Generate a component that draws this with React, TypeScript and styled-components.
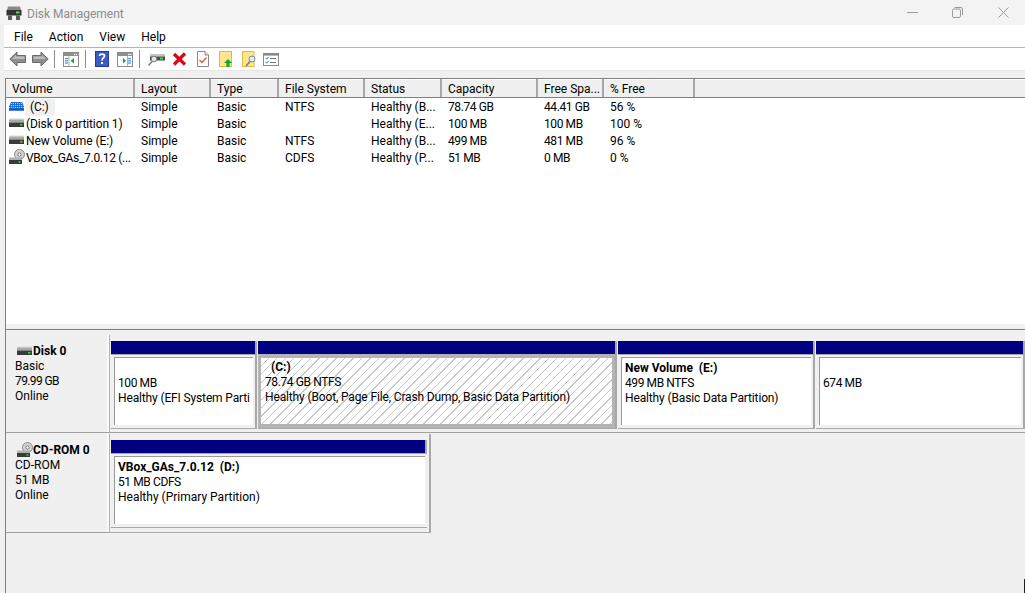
import React from "react";
import styled, { createGlobalStyle } from "styled-components";

const Global = createGlobalStyle`
  html, body { margin: 0; padding: 0; height: 100%; overflow: hidden; background: #f0f0f0; }
  #root { height: 100%; }
`;

const Window = styled.div`
  position: relative; width: 1025px; height: 593px; display: flex; flex-direction: column; overflow: hidden;
  font-family: Roboto, "Noto Sans", sans-serif; font-size: 12px; color: #000; background: #f0f0f0;
`;
const TitleBar = styled.div`
  height: 25px; flex: none; display: flex; align-items: center; background: #f3f3f3; padding-left: 6px;
`;
const TitleText = styled.span`
  margin: 2px 0 0 5px; color: #8c8c8c; font-size: 12px; flex: 1;
`;
const WinButton = styled.div<{ $w: number }>`
  width: ${(p) => p.$w}px; height: 25px; display: flex; align-items: center; justify-content: center;
`;
const MenuBar = styled.div`
  height: 21px; padding-top: 1px; flex: none; margin-left: 4px; background: #fff; display: flex; align-items: center;
  padding-left: 10px; gap: 16px; border-bottom: 1px solid #b4b4b4;
`;
const Toolbar = styled.div`
  height: 22px; flex: none; margin-left: 4px; background: #fff; display: flex; align-items: center;
  border-bottom: 1px solid #e6e6e6;
`;
const ToolSlot = styled.div<{ $ml: number }>`
  margin-left: ${(p) => p.$ml}px; height: 22px; display: flex; align-items: center; flex: none;
`;
const ToolSep = styled.div<{ $ml: number }>`
  width: 1px; height: 18px; background: #8a8a8a; flex: none; margin-left: ${(p) => p.$ml}px;
`;
const Main = styled.div`
  flex: 1; display: flex; flex-direction: column; margin: 7px 0 0 5px;
  border-left: 1px solid #808080; border-top: 1px solid #808080;
`;
const ListPane = styled.div`
  height: 245px; flex: none; background: #fff;
`;
const HeaderRow = styled.div`
  height: 18px; display: flex; background: #f0f0f0; border-bottom: 1px solid #808080;
  box-shadow: inset 0 1px 0 #fff;
`;
const HeaderCell = styled.div<{ $w: number }>`
  width: ${(p) => p.$w}px; flex: none; box-sizing: border-box; padding: 2px 0 0 6px; line-height: 16px;
  border-right: 2px solid #a8a8a8; white-space: nowrap; overflow: hidden;
`;
const RowList = styled.div`
  padding-top: 1px;
`;
const Row = styled.div`
  height: 17px; display: flex; line-height: 17px;
`;
const Cell = styled.div<{ $w: number; $num?: boolean }>`
  width: ${(p) => p.$w}px; flex: none; box-sizing: border-box; padding-left: 6px; white-space: nowrap; overflow: hidden;
  ${(p) => (p.$num ? "letter-spacing: -0.4px;" : "")}
`;
const VolumeCell = styled.div`
  width: 129px; flex: none; display: flex; align-items: center; padding-left: 3px; box-sizing: border-box; white-space: nowrap;
`;
const VolumeIcon = styled.span`
  display: flex; flex: none; margin-top: -2px;
`;
const VolumeName = styled.span<{ $sel?: boolean; $tight?: boolean }>`
  margin-left: ${(p) => (p.$sel ? "0" : "1px")};
  padding: 0 ${(p) => (p.$sel ? "6px" : "0")} 0 ${(p) => (p.$sel ? "5px" : "0")};
  background: ${(p) => (p.$sel ? "#f0f0f0" : "transparent")};
  letter-spacing: ${(p) => (p.$tight ? "-0.3px" : "-0.1px")};
`;
const Splitter = styled.div`
  height: 5px; flex: none; background: #f0f0f0; border-bottom: 1px solid #808080;
`;
const DiskPane = styled.div`
  flex: 1; padding-top: 5px; display: flex; flex-direction: column;
`;
const DiskRow = styled.div<{ $h: number }>`
  height: ${(p) => p.$h}px; flex: none; display: flex; box-sizing: border-box;
`;
const DiskRowRule = styled.div`
  height: 1px; background: #a0a0a0; flex: none; margin-bottom: 1px;
`;
const DiskLabel = styled.div<{ $ruled?: boolean }>`
  width: 104px; flex: none; box-sizing: border-box; padding: 9px 0 0 9px; line-height: 15px;
  border-right: 1px solid #b0b0b0; background: #f0f0f0;
  box-shadow: inset -2px 0 0 #fafafa;
  ${(p) => (p.$ruled ? "border-bottom: 1px solid #a0a0a0;" : "")}
`;
const DiskTitle = styled.div`
  display: flex; align-items: center; font-weight: 700; line-height: 15px; height: 15px; margin-left: 2px;
`;
const DiskLine = styled.div<{ $num?: boolean }>`
  ${(p) => (p.$num ? "letter-spacing: -0.6px;" : "")}
`;
const Partitions = styled.div<{ $framed?: boolean }>`
  display: flex; align-self: flex-start; padding: 6px 0 0 1px;
  ${(p) => (p.$framed ? "padding-bottom: 4px; padding-right: 1px; border-right: 2px solid #a8a8a8; border-bottom: 1px solid #a8a8a8;" : "")}
`;
const Partition = styled.div<{ $w: number; $open?: boolean }>`
  width: ${(p) => p.$w}px; flex: none; display: flex; flex-direction: column; box-sizing: content-box;
  border-bottom: 1px solid #a8a8a8; margin-right: 1px;
  ${(p) => (p.$open ? "" : "border-right: 2px solid #a8a8a8;")}
`;
const Bar = styled.div<{ $edge?: boolean }>`
  height: 13px; background: #000080; flex: none;
  ${(p) => (p.$edge ? "border-right: 2px solid #a8a8a8;" : "")}
`;
const PartBody = styled.div<{ $sel?: boolean }>`
  height: 74px; box-sizing: border-box; background: #f0f0f0;
  ${(p) =>
    p.$sel
      ? "border: 3px solid #b4b4b4; border-top-width: 4px; border-bottom-width: 4px;"
      : "border-top: 1px solid #a8a8a8; padding: 2px 2px 3px 3px;"}
`;
const PartInner = styled.div<{ $hatch?: boolean }>`
  height: 100%; box-sizing: border-box; white-space: pre; line-height: 15px; color: #000;
  padding: ${(p) => (p.$hatch ? "2px 0 0 4px" : "3px 0 0 3px")};
  ${(p) =>
    p.$hatch
      ? `background-color: #fff;
         background-image: repeating-linear-gradient(135deg, #fff 0, #fff 5px, #c8c8c8 5px, #c8c8c8 6px);`
      : `background: #fff; border-top: 1px solid #999; border-left: 1px solid #999;`}
`;
const PartName = styled.div<{ $indent?: boolean }>`
  font-weight: 700; height: 15px; ${(p) => (p.$indent ? "padding-left: 6px;" : "")}
`;
const PartLine = styled.div<{ $num?: boolean; $tight?: boolean }>`
  ${(p) => (p.$num ? "letter-spacing: -0.4px;" : "")}
  ${(p) => (p.$tight ? "letter-spacing: -0.14px;" : "")}
`;
const Spacer = styled.div`
  height: 15px;
`;
const EdgeMark = styled.div`
  position: absolute; right: 0; top: 579px; width: 1px; height: 14px; background: #222;
`;

const IconDisk = () => (
  <svg width="16" height="16" viewBox="0 0 16 16">
    <rect x="0.5" y="2.5" width="14" height="1" fill="#d8d8d8" />
    <rect x="0" y="3.5" width="15" height="3" fill="#a8a8a8" />
    <rect x="0" y="6.5" width="15" height="4.5" fill="#3a3a3a" />
    <rect x="11" y="8" width="2.5" height="1.5" fill="#3fd04a" />
  </svg>
);
const IconVolumeC = () => (
  <svg width="16" height="16" viewBox="0 0 16 16">
    <defs>
      <pattern id="dots" width="2" height="2" patternUnits="userSpaceOnUse">
        <rect width="2" height="2" fill="#1c6ee0" />
        <rect width="1" height="1" fill="#a5d5ff" />
      </pattern>
    </defs>
    <polygon points="2,3 13,3 15,7 15,11.5 0,11.5 0,7" fill="url(#dots)" />
    <rect x="0" y="9.5" width="15" height="2" fill="#0d57c0" />
  </svg>
);
const IconCd = () => (
  <svg width="16" height="17" viewBox="0 0 16 17">
    <circle cx="10.5" cy="5.5" r="5" fill="#d2d2d2" stroke="#8c8c8c" />
    <circle cx="10.5" cy="5.5" r="1.6" fill="#fff" stroke="#777" />
    <rect x="0" y="8.5" width="13" height="2.5" fill="#b0b0b0" />
    <rect x="0" y="11" width="13" height="4" fill="#3a3a3a" />
    <rect x="9.5" y="12.3" width="2" height="1.5" fill="#3fd04a" />
  </svg>
);
const IconApp = () => (
  <svg width="16" height="16" viewBox="0 0 16 16">
    <path d="M2 1.5 H14 L15 5 H1 Z" fill="#8a8a8a" />
    <rect x="0.5" y="5" width="15" height="5.5" fill="#333" />
    <rect x="10" y="6.5" width="3.5" height="2" fill="#56e05c" />
    <rect x="2" y="10.5" width="4" height="4.5" fill="#5c5c5c" />
    <rect x="10" y="10.5" width="4" height="4.5" fill="#5c5c5c" />
  </svg>
);
const IconArrow = ({ right }: { right?: boolean }) => (
  <svg width="17" height="16" viewBox="0 0 17 16">
    <g transform={right ? "matrix(-1 0 0 1 17 0)" : undefined}>
      <path d="M8 1 L0.8 8 L8 15 V11.5 H16.5 V4.5 H8 Z" fill="#8f8f8f" stroke="#6a6a6a" />
      <path d="M7 4 L3 8 H15.5 V5.5 H7 Z" fill="#bdbdbd" />
    </g>
  </svg>
);
const IconPane = ({ right }: { right?: boolean }) => (
  <svg width="16" height="15" viewBox="0 0 16 15">
    <rect x="0.5" y="0.5" width="15" height="14" fill="#fff" stroke="#8a8a8a" />
    <rect x="1" y="1" width="14" height="3" fill="#8f8f8f" />
    <rect x="11" y="1.8" width="1.3" height="1.3" fill="#fff" />
    <rect x="13" y="1.8" width="1.3" height="1.3" fill="#fff" />
    {right ? (
      <>
        <path d="M6 6 L9 8.7 L6 11.5 Z" fill="#1ea32c" />
        <rect x="11" y="6" width="3" height="1.2" fill="#4a90d9" />
        <rect x="11" y="8.2" width="3" height="1.2" fill="#4a90d9" />
        <rect x="11" y="10.4" width="3" height="1.2" fill="#4a90d9" />
        <rect x="10" y="4" width="0.8" height="10" fill="#9a9a9a" />
      </>
    ) : (
      <>
        <path d="M11 6 L7.5 8.7 L11 11.5 Z" fill="#1ea32c" />
        <rect x="2" y="6" width="3" height="1.2" fill="#4a90d9" />
        <rect x="2" y="8.2" width="3" height="1.2" fill="#4a90d9" />
        <rect x="2" y="10.4" width="3" height="1.2" fill="#4a90d9" />
        <rect x="5.5" y="4" width="0.8" height="10" fill="#9a9a9a" />
      </>
    )}
  </svg>
);
const IconHelp = () => (
  <svg width="14" height="16" viewBox="0 0 14 16">
    <rect x="0" y="0" width="14" height="16" fill="#24399a" />
    <rect x="1" y="1" width="12" height="14" fill="#3b5cc4" />
    <path d="M4.5 5 C4.5 2.4 9.5 2.4 9.5 5 C9.5 7 7 7 7 9.5" fill="none" stroke="#fff" strokeWidth="1.7" />
    <rect x="6" y="11" width="2" height="2" fill="#fff" />
  </svg>
);
const IconConnect = () => (
  <svg width="17" height="16" viewBox="0 0 17 16">
    <rect x="2" y="3" width="15" height="2.5" fill="#c4c4c4" />
    <rect x="2" y="5.5" width="15" height="4" fill="#4a4a4a" />
    <rect x="12" y="6.5" width="3" height="2" fill="#46d44e" />
    <circle cx="6" cy="8" r="2.8" fill="#d9e9f7" stroke="#7a7a7a" />
    <line x1="4" y1="10.5" x2="0.5" y2="14.5" stroke="#7a7a7a" strokeWidth="1.5" />
  </svg>
);
const IconDelete = () => (
  <svg width="15" height="14" viewBox="0 0 15 14">
    <path d="M2 2 L13 12.5 M13 1.5 L2 12.5" stroke="#d40a14" strokeWidth="3.2" />
  </svg>
);
const IconCheckDoc = () => (
  <svg width="12" height="16" viewBox="0 0 12 16">
    <path d="M0.5 0.5 H8 L11.5 4 V15.5 H0.5 Z" fill="#fff" stroke="#8a8a8a" />
    <path d="M8 0.5 V4 H11.5" fill="#e6e6e6" stroke="#8a8a8a" />
    <path d="M2.5 9 L5 11.5 L9.5 6.5" fill="none" stroke="#e2552a" strokeWidth="1.3" />
  </svg>
);
const IconFolderUp = () => (
  <svg width="13" height="16" viewBox="0 0 13 16">
    <rect x="0.5" y="0.5" width="12" height="15" fill="#fde68e" stroke="#e3b93d" />
    <path d="M9 8 L13 12 H10.6 V16 H7.4 V12 H5 Z" fill="#13a82a" />
  </svg>
);
const IconFolderSearch = () => (
  <svg width="15" height="16" viewBox="0 0 15 16">
    <rect x="0.5" y="0.5" width="11.5" height="15" fill="#fde68e" stroke="#e3b93d" />
    <circle cx="10" cy="8" r="3" fill="#dcecf8" stroke="#7d8a96" />
    <line x1="8" y1="10.5" x2="4" y2="15" stroke="#6d7a86" strokeWidth="1.5" />
  </svg>
);
const IconList = () => (
  <svg width="16" height="13" viewBox="0 0 16 13">
    <rect x="0.5" y="0.5" width="15" height="12" fill="#fff" stroke="#8a8a8a" />
    <rect x="1" y="1" width="14" height="1.6" fill="#8a8a8a" />
    <path d="M2.5 5 L3.7 6.2 L5.5 4" fill="none" stroke="#2e80d0" />
    <path d="M2.5 9 L3.7 10.2 L5.5 8" fill="none" stroke="#2e80d0" />
    <rect x="7" y="5" width="6" height="1" fill="#777" />
    <rect x="7" y="9" width="6" height="1" fill="#777" />
  </svg>
);

const columns = [
  ["Volume", 129], ["Layout", 76], ["Type", 68], ["File System", 86],
  ["Status", 77], ["Capacity", 96], ["Free Spa...", 66], ["% Free", 91],
] as const;

const rows = [
  { icon: <IconVolumeC />, name: "(C:)", sel: true, fs: "NTFS", status: "Healthy (B...", cap: "78.74 GB", free: "44.41 GB", pct: "56 %" },
  { icon: <IconDisk />, name: "(Disk 0 partition 1)", fs: "", status: "Healthy (E...", cap: "100 MB", free: "100 MB", pct: "100 %" },
  { icon: <IconDisk />, name: "New Volume (E:)", fs: "NTFS", status: "Healthy (B...", cap: "499 MB", free: "481 MB", pct: "96 %" },
  { icon: <IconCd />, name: "VBox_GAs_7.0.12 (...", tight: true, fs: "CDFS", status: "Healthy (P...", cap: "51 MB", free: "0 MB", pct: "0 %" },
];

export default function App() {
  return (
    <Window>
      <Global />
      <TitleBar>
        <IconApp />
        <TitleText>Disk Management</TitleText>
        <WinButton $w={42}>
          <svg width="11" height="11" viewBox="0 0 11 11"><line x1="0" y1="5.5" x2="11" y2="5.5" stroke="#9a9a9a" /></svg>
        </WinButton>
        <WinButton $w={48}>
          <svg width="11" height="11" viewBox="0 0 11 11"><rect x="0.5" y="2" width="8" height="8.5" rx="1.5" fill="none" stroke="#9a9a9a" /><path d="M2.5 0.5 H9 Q10.5 0.5 10.5 2 V8" fill="none" stroke="#9a9a9a" /></svg>
        </WinButton>
        <WinButton $w={44}>
          <svg width="11" height="11" viewBox="0 0 11 11"><path d="M0.5 0.5 L10.5 10.5 M10.5 0.5 L0.5 10.5" stroke="#9a9a9a" /></svg>
        </WinButton>
      </TitleBar>
      <MenuBar>
        <span>File</span><span>Action</span><span>View</span><span>Help</span>
      </MenuBar>
      <Toolbar>
        <ToolSlot $ml={5}><IconArrow /></ToolSlot>
        <ToolSlot $ml={6}><IconArrow right /></ToolSlot>
        <ToolSep $ml={5} />
        <ToolSlot $ml={8}><IconPane /></ToolSlot>
        <ToolSep $ml={6} />
        <ToolSlot $ml={9}><IconHelp /></ToolSlot>
        <ToolSlot $ml={8}><IconPane right /></ToolSlot>
        <ToolSep $ml={6} />
        <ToolSlot $ml={8}><IconConnect /></ToolSlot>
        <ToolSlot $ml={7}><IconDelete /></ToolSlot>
        <ToolSlot $ml={10}><IconCheckDoc /></ToolSlot>
        <ToolSlot $ml={10}><IconFolderUp /></ToolSlot>
        <ToolSlot $ml={10}><IconFolderSearch /></ToolSlot>
        <ToolSlot $ml={6}><IconList /></ToolSlot>
      </Toolbar>
      <Main>
        <ListPane>
          <HeaderRow>
            {columns.map(([t, w]) => (
              <HeaderCell key={t} $w={w}>{t}</HeaderCell>
            ))}
          </HeaderRow>
          <RowList>
            {rows.map((r) => (
              <Row key={r.name}>
                <VolumeCell>
                  <VolumeIcon>{r.icon}</VolumeIcon>
                  <VolumeName $sel={r.sel} $tight={r.tight}>{r.name}</VolumeName>
                </VolumeCell>
                <Cell $w={76}>Simple</Cell>
                <Cell $w={68}>Basic</Cell>
                <Cell $w={86}>{r.fs}</Cell>
                <Cell $w={77}>{r.status}</Cell>
                <Cell $w={96} $num>{r.cap}</Cell>
                <Cell $w={66} $num>{r.free}</Cell>
                <Cell $w={91}>{r.pct}</Cell>
              </Row>
            ))}
          </RowList>
        </ListPane>
        <Splitter />
        <DiskPane>
          <DiskRow $h={97}>
            <DiskLabel>
              <DiskTitle><IconDisk />Disk 0</DiskTitle>
              <DiskLine>Basic</DiskLine>
              <DiskLine $num>79.99 GB</DiskLine>
              <DiskLine>Online</DiskLine>
            </DiskLabel>
            <Partitions>
              <Partition $w={144}>
                <Bar />
                <PartBody>
                  <PartInner>
                    <Spacer />
                    <PartLine $num>100 MB</PartLine>
                    <PartLine $tight>Healthy (EFI System Parti</PartLine>
                  </PartInner>
                </PartBody>
              </Partition>
              <Partition $w={357}>
                <Bar />
                <PartBody $sel>
                  <PartInner $hatch>
                    <PartName $indent>(C:)</PartName>
                    <PartLine $num>78.74 GB NTFS</PartLine>
                    <PartLine $tight>Healthy (Boot, Page File, Crash Dump, Basic Data Partition)</PartLine>
                  </PartInner>
                </PartBody>
              </Partition>
              <Partition $w={195}>
                <Bar />
                <PartBody>
                  <PartInner>
                    <PartName>New Volume  (E:)</PartName>
                    <PartLine $num>499 MB NTFS</PartLine>
                    <PartLine $tight>Healthy (Basic Data Partition)</PartLine>
                  </PartInner>
                </PartBody>
              </Partition>
              <Partition $w={207}>
                <Bar />
                <PartBody>
                  <PartInner>
                    <Spacer />
                    <PartLine $num>674 MB</PartLine>
                  </PartInner>
                </PartBody>
              </Partition>
            </Partitions>
          </DiskRow>
          <DiskRowRule />
          <DiskRow $h={99}>
            <DiskLabel $ruled>
              <DiskTitle><IconCd />CD-ROM 0</DiskTitle>
              <DiskLine>CD-ROM</DiskLine>
              <DiskLine>51 MB</DiskLine>
              <DiskLine>Online</DiskLine>
            </DiskLabel>
            <Partitions $framed>
              <Partition $w={316} $open>
                <Bar $edge />
                <PartBody>
                  <PartInner>
                    <PartName>VBox_GAs_7.0.12  (D:)</PartName>
                    <PartLine $num>51 MB CDFS</PartLine>
                    <PartLine>Healthy (Primary Partition)</PartLine>
                  </PartInner>
                </PartBody>
              </Partition>
            </Partitions>
          </DiskRow>
        </DiskPane>
      </Main>
      <EdgeMark />
    </Window>
  );
}
